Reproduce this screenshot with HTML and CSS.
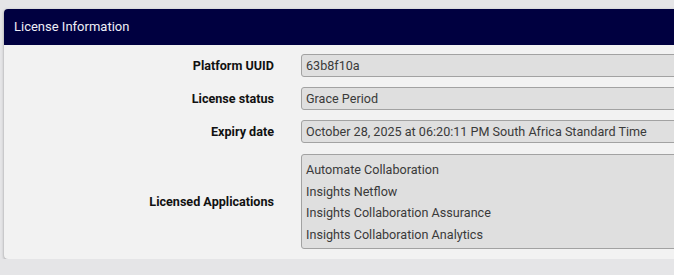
FILE: index.html
```html
<!DOCTYPE html>
<html lang="en">
<head>
    <meta charset="UTF-8">
    <meta name="viewport" content="width=device-width, initial-scale=1.0">
    <title>License Information</title>
    <link rel="stylesheet" href="styles.css">
</head>
<body>
    <div class="card">
        <div class="card-header">License Information</div>
        <div class="card-body">
            <label class="field-label">Platform UUID</label>
            <div class="field-value">63b8f10a</div>

            <label class="field-label">License status</label>
            <div class="field-value">Grace Period</div>

            <label class="field-label">Expiry date</label>
            <div class="field-value">October 28, 2025 at 06:20:11 PM South Africa Standard Time</div>

            <label class="field-label">Licensed Applications</label>
            <div class="field-value field-list">
                <div>Automate Collaboration</div>
                <div>Insights Netflow</div>
                <div>Insights Collaboration Assurance</div>
                <div>Insights Collaboration Analytics</div>
            </div>
        </div>
    </div>
</body>
</html>
```

FILE: styles.css
```css
body {
    font-family: Roboto, "Liberation Sans", Arial, sans-serif;
    margin: 0;
    padding: 9px 0 0 4px;
    background-color: #e5e5e7;
    overflow: hidden;
}
.card {
    width: 740px;
    background-color: #f2f2f2;
    border-radius: 4px;
    box-shadow: 0 1px 3px rgba(0, 0, 0, 0.35);
}
.card-header {
    height: 36px;
    line-height: 36px;
    padding-left: 10px;
    background-color: #000040;
    color: #eeeef6;
    font-size: 13px;
    border-radius: 4px 4px 0 0;
}
.card-body {
    display: grid;
    grid-template-columns: 270px 1fr;
    column-gap: 27px;
    row-gap: 10px;
    padding: 9px 0 10px 0;
    align-items: center;
}
.field-label {
    text-align: right;
    font-weight: bold;
    font-size: 12.6px;
    color: #111;
}
.field-value {
    background-color: #dfdfdf;
    border: 1px solid #a2a2a2;
    border-radius: 3px;
    padding: 3px 4px;
    line-height: 15px;
    font-size: 12.6px;
    color: #3a3a3a;
}
.field-list {
    margin-top: 1px;
    line-height: 21.5px;
    padding: 4px 4px 3px 4px;
}
```
